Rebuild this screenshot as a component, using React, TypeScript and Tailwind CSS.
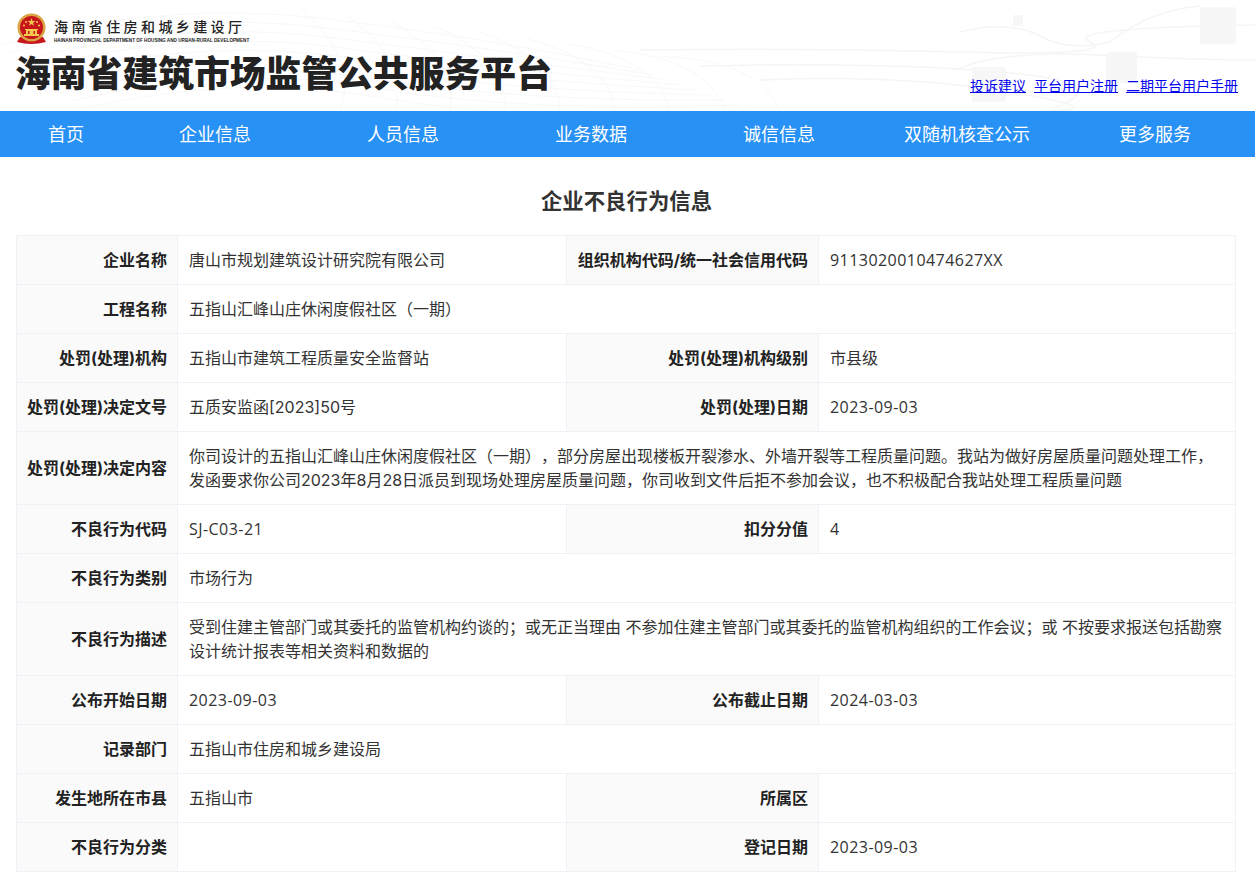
const rowsData = [
  { cells: ['企业名称', '唐山市规划建筑设计研究院有限公司', '组织机构代码/统一社会信用代码', '9113020010474627XX'] },
  { cells: ['工程名称', '五指山汇峰山庄休闲度假社区（一期）'] },
  { cells: ['处罚(处理)机构', '五指山市建筑工程质量安全监督站', '处罚(处理)机构级别', '市县级'] },
  { cells: ['处罚(处理)决定文号', '五质安监函[2023]50号', '处罚(处理)日期', '2023-09-03'] },
  {
    cells: [
      '处罚(处理)决定内容',
      '你司设计的五指山汇峰山庄休闲度假社区（一期），部分房屋出现楼板开裂渗水、外墙开裂等工程质量问题。我站为做好房屋质量问题处理工作，发函要求你公司2023年8月28日派员到现场处理房屋质量问题，你司收到文件后拒不参加会议，也不积极配合我站处理工程质量问题',
    ],
  },
  { cells: ['不良行为代码', 'SJ-C03-21', '扣分分值', '4'] },
  { cells: ['不良行为类别', '市场行为'] },
  {
    cells: [
      '不良行为描述',
      '受到住建主管部门或其委托的监管机构约谈的；或无正当理由 不参加住建主管部门或其委托的监管机构组织的工作会议；或 不按要求报送包括勘察设计统计报表等相关资料和数据的',
    ],
  },
  { cells: ['公布开始日期', '2023-09-03', '公布截止日期', '2024-03-03'] },
  { cells: ['记录部门', '五指山市住房和城乡建设局'] },
  { cells: ['发生地所在市县', '五指山市', '所属区', ''] },
  { cells: ['不良行为分类', '', '登记日期', '2023-09-03'] },
];

const navItems = ['企业信息', '人员信息', '业务数据', '诚信信息', '双随机核查公示', '更多服务'];

const labelCell =
  'h-[49px] border border-[#f0f0f7] bg-[#fafafa] px-[10px] py-[12px] text-right font-bold whitespace-nowrap text-[#222]';
const valueCell = 'h-[49px] border border-[#f0f0f7] pl-[11px] pr-[10px] py-[12px]';

// Codes and dates use a slightly different latin face than the Chinese copy
function Value({ text }: { text: string }) {
  const isLatin = /^[\x00-\x7F]+$/.test(text);
  return <span className={isLatin ? "font-['Open_Sans',sans-serif] leading-none tracking-[0.45px]" : ''}>{text}</span>;
}

function Emblem() {
  return (
    <svg width="31" height="32" viewBox="0 0 31 32" className="shrink-0">
      <path d="M4 24 L1 29 Q15 33 30 29 L27 24 Z" fill="#c8161d" />
      <circle cx="15.5" cy="14.5" r="14" fill="#d9a441" />
      <circle cx="15.5" cy="14.5" r="11.5" fill="#c8161d" />
      <polygon points="15.5,5 16.5,8 19.5,8 17,9.8 18,12.8 15.5,11 13,12.8 14,9.8 11.5,8 14.5,8" fill="#f3c94e" />
      <circle cx="10" cy="9" r="1" fill="#f3c94e" />
      <circle cx="21" cy="9" r="1" fill="#f3c94e" />
      <circle cx="8" cy="12.5" r="1" fill="#f3c94e" />
      <circle cx="23" cy="12.5" r="1" fill="#f3c94e" />
      <path d="M8 21 H23 V23 H8 Z M10 17 H21 V21 H10 Z M9 16 H22 V17 H9 Z" fill="#f3c94e" />
      <rect x="12" y="18" width="1.5" height="3" fill="#c8161d" />
      <rect x="17.5" y="18" width="1.5" height="3" fill="#c8161d" />
    </svg>
  );
}

// Faint wave mesh behind the header
function HeaderBackdrop() {
  const mesh = Array.from({ length: 9 }, (_, i) => i);
  return (
    <svg className="absolute inset-0 h-full w-full" viewBox="0 0 1255 111" fill="none">
      <g stroke="#f8f8f9" strokeWidth="1">
        {mesh.map((i) => (
          <path key={i} d={`M${i * 10} ${45 + i * 8} Q${160 + i * 10} ${i * 9} ${320 + i * 8} ${18 + i * 10} T${640 + i * 14} ${70 + i * 5}`} />
        ))}
        {mesh.map((i) => (
          <path key={`v${i}`} d={`M${300 + i * 45} ${8 + i * 6} Q${360 + i * 50} 60 ${340 + i * 55} 111`} />
        ))}
      </g>
      <g stroke="#f5f5f6" strokeWidth="1.5">
        <path d="M640 50 Q800 48 960 52 T1090 42 T1255 25" />
        <path d="M700 66 Q880 62 1000 72 T1055 108" />
        <path d="M760 80 Q900 74 1010 92 T1040 111" />
        <path d="M960 32 Q1010 20 1040 36 T1110 42 Q1150 10 1200 6" />
        <path d="M955 70 Q1000 50 1100 55 T1255 60" />
      </g>
      <g fill="#f7f7f8">
        <rect x="972" y="67" width="34" height="35" rx="2" />
        <rect x="1106" y="52" width="31" height="31" rx="2" />
        <rect x="1200" y="7" width="36" height="37" rx="2" />
        <rect x="1013" y="15" width="10" height="11" rx="1" />
      </g>
    </svg>
  );
}

export default function App() {
  return (
    <div className="min-h-[890px] bg-white font-['Inter','Noto_Sans_CJK_SC',sans-serif] [text-spacing-trim:space-all]">
      <header className="relative h-[111px] overflow-hidden bg-white">
        <HeaderBackdrop />
        <div className="relative flex h-full flex-col px-[16px]">
          <div className="flex items-center gap-[7px] pt-[13px]">
            <Emblem />
            <div className="flex flex-col pt-[3px]">
              <span className="text-[14px] leading-[20px] font-medium tracking-[3.4px] text-[#222]">海南省住房和城乡建设厅</span>
              <span className="pt-[1px] font-['Liberation_Sans',sans-serif] text-[4.65px] leading-[6px] font-bold whitespace-nowrap text-[#222]">
                HAINAN PROVINCIAL DEPARTMENT OF HOUSING AND URBAN-RURAL DEVELOPMENT
              </span>
            </div>
          </div>
          <div className="mt-[6px] flex items-end justify-between">
            <h1 className="-ml-[1px] text-[35.8px] leading-[46px] font-black text-[#222]">海南省建筑市场监管公共服务平台</h1>
            <div className="flex gap-2 pr-[1px] pb-[2px] text-[14px] leading-[18px] text-[#0000ee] underline">
              <a href="#">投诉建议</a>
              <a href="#">平台用户注册</a>
              <a href="#">二期平台用户手册</a>
            </div>
          </div>
        </div>
      </header>

      <nav className="flex h-[46px] items-center bg-[#2891f5] text-[18px] text-white">
        <a href="#" className="w-[121px] pl-[11px] text-center">首页</a>
        {navItems.map((item) => (
          <a key={item} href="#" className="w-[188px] text-center">{item}</a>
        ))}
      </nav>

      <main className="px-[16px]">
        <h2 className="-ml-[2px] pt-[30px] pb-[20px] text-center text-[21.4px] leading-[28px] font-bold text-[#333]">企业不良行为信息</h2>
        <table className="w-[1220px] table-fixed border-collapse text-[16px] leading-[24px] text-[#333]">
          <colgroup>
            <col className="w-[161px]" />
            <col className="w-[389px]" />
            <col className="w-[252px]" />
            <col />
          </colgroup>
          <tbody>
            {rowsData.map((row) => (
              <tr key={row.cells[0]}>
                <th className={labelCell}>{row.cells[0]}</th>
                {row.cells.length === 2 ? (
                  <td colSpan={3} className={valueCell}>
                    <Value text={row.cells[1]} />
                  </td>
                ) : (
                  <>
                    <td className={valueCell}>
                      <Value text={row.cells[1]} />
                    </td>
                    <th className={labelCell}>{row.cells[2]}</th>
                    <td className={valueCell}>
                      <Value text={row.cells[3]} />
                    </td>
                  </>
                )}
              </tr>
            ))}
          </tbody>
        </table>
      </main>
    </div>
  );
}
